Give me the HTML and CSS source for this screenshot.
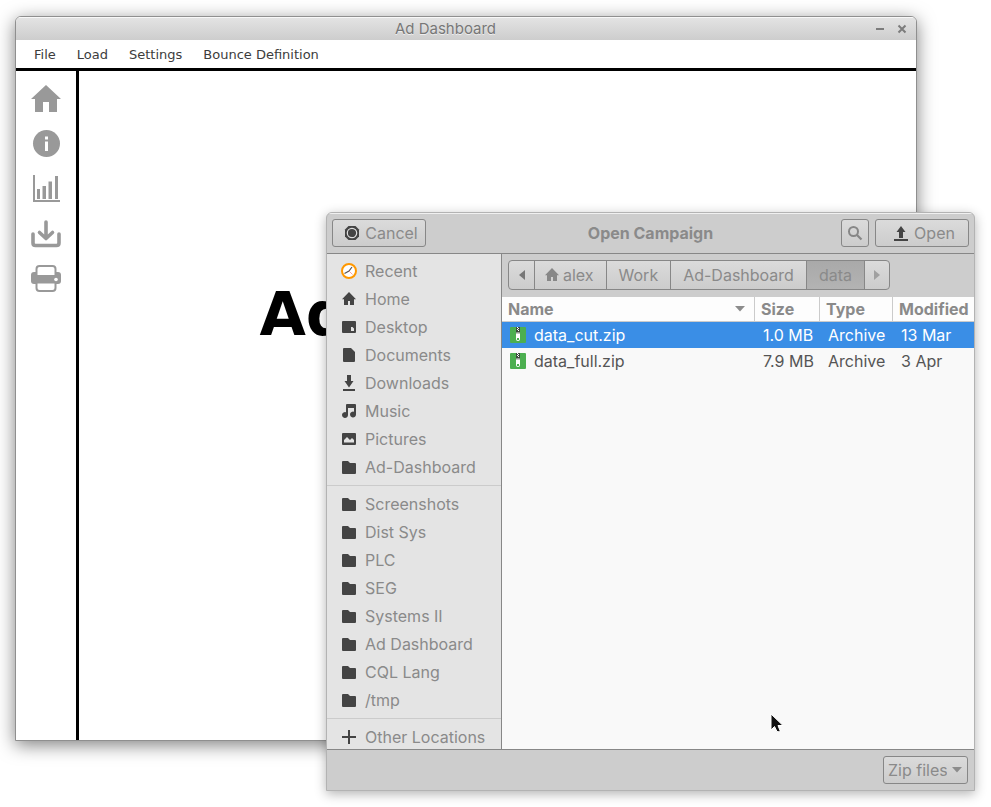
FILE: index.html
```html
<!DOCTYPE html>
<html lang="en">
<head>
<meta charset="utf-8">
<title>Ad Dashboard</title>
<link rel="stylesheet" href="styles.css">
</head>
<body>
<svg class="defs" aria-hidden="true">
  <symbol id="folder" viewBox="0 0 16 16"><path d="M1 3a1 1 0 0 1 1-1h5l2 2h5a1 1 0 0 1 1 1v9a1 1 0 0 1-1 1H2a1 1 0 0 1-1-1z"/></symbol>
  <symbol id="home" viewBox="0 0 16 16"><path d="M8 1 1 8.200h2V14h4v-4h2v4h4V8.200h2z"/></symbol>
  <symbol id="zip" viewBox="0 0 16 16">
    <rect width="16" height="16" rx="1" fill="#4caf50"/>
    <path d="M6 0h4v6H6z" fill="#3c4a3d"/>
    <path d="M7 0h1v1H7zM8 1h1v1H8zM7 2h1v1H7zM8 3h1v1H8z" fill="#fff"/>
    <path d="M6 6.500Q6 5 8 5t2 1.500V12q0 2-2 2t-2-2z" fill="#fff"/>
    <path d="M6 6.500Q6 5 8 5t2 1.500z" fill="#8a8f8a"/>
    <rect x="7" y="11" width="2" height="2" fill="#4caf50"/>
  </symbol>
</svg>

<main class="window app">
  <header class="titlebar">
    <span class="titlebar-text">Ad Dashboard</span>
    <div class="window-controls">
      <button aria-label="Minimise"><svg viewBox="0 0 10 10"><path d="M1 5h8" stroke-width="2"/></svg></button>
      <button aria-label="Close"><svg viewBox="0 0 10 10"><path d="M1.500 1.500l7 7M8.500 1.500l-7 7" stroke-width="2"/></svg></button>
    </div>
  </header>
  <nav class="menubar">
    <button>File</button><button>Load</button><button>Settings</button><button>Bounce Definition</button>
  </nav>
  <div class="workspace">
    <nav class="toolbar">
      <button aria-label="Home"><svg viewBox="0 0 30 30"><path d="M15 1 0 15h4v13h8V18h6v10h8V15h4z"/></svg></button>
      <button aria-label="Information"><svg viewBox="0 0 30 30"><circle cx="15.500" cy="14.500" r="13.500"/><path d="M14 7.500h3v3h-3zM14 12.500h3V22h-3z" fill="#fff"/></svg></button>
      <button aria-label="Charts"><svg viewBox="0 0 30 30"><path d="M2 1h2v25h25v2H2zM6 15h3v10H6zM11.500 12h3.500v13h-3.500zM17.500 7.500H21V25h-3.500zM24 2h3v23h-3z"/></svg></button>
      <button aria-label="Export"><svg viewBox="0 0 30 30"><path d="M2 15v9q0 2.500 2.500 2.500h21Q28 26.500 28 24v-9M15 3v16M8.500 13.500l6.500 6 6.500-6" fill="none" stroke="#999" stroke-width="3.600" stroke-linecap="round" stroke-linejoin="round"/></svg></button>
      <button aria-label="Print"><svg viewBox="0 0 30 30"><path d="M0 11q0-3 3-3h24q3 0 3 3v6q0 3-3 3H3q-3 0-3-3z"/><path d="M5.500 12V5q0-3 3-3h13q3 0 3 3v7zM5.500 18.500h19V24q0 3-3 3h-13q-3 0-3-3z" fill="#fff" stroke="#999" stroke-width="2"/><path d="M4 12h22v6H4z"/><circle cx="25" cy="15.500" r="1.800" fill="#fff"/></svg></button>
    </nav>
    <section class="welcome"><h1>Ad Dashboard</h1></section>
  </div>
</main>

<section class="window dialog" role="dialog" aria-labelledby="dialog-title">
  <header class="dialog-header">
    <div class="header-side">
      <button class="btn action"><svg class="icon dark" viewBox="0 0 16 16"><path d="M4.500 1h7L15 4.500v7L11.500 15h-7L1 11.500v-7z"/><circle cx="8" cy="8" r="4.700" fill="none" stroke="#ddd" stroke-width="1.200"/></svg>Cancel</button>
    </div>
    <h2 id="dialog-title">Open Campaign</h2>
    <div class="header-side end">
      <button class="btn square" aria-label="Search"><svg class="icon" viewBox="0 0 16 16"><circle cx="6.500" cy="6.500" r="4.500" fill="none" stroke="#878787" stroke-width="2"/><path d="M10 10l4.500 4.500" stroke="#878787" stroke-width="2.200"/></svg></button>
      <button class="btn action"><svg class="icon dark" viewBox="0 0 16 16"><path d="M8 1l4.500 6H10v6H6V7H3.500zM1 14h14v2H1z"/></svg>Open</button>
    </div>
  </header>

  <div class="dialog-body">
    <nav class="places">
      <ul>
        <li><a href="#"><svg class="icon" viewBox="0 0 16 16"><circle cx="8" cy="8" r="7" fill="#fff" stroke="#ff9800" stroke-width="2"/><path d="M3.500 10.500 8 8l3-4" fill="none" stroke="#555" stroke-width="1.200"/><path d="M8 8l3.500 3.500" stroke="#f4a0a0"/></svg>Recent</a></li>
        <li><a href="#"><svg class="icon dark"><use href="#home"/></svg>Home</a></li>
        <li><a href="#"><svg class="icon dark" viewBox="0 0 16 16"><path fill-rule="evenodd" d="M2 2h12q1 0 1 1v10q0 1-1 1H2q-1 0-1-1V3q0-1 1-1zm8 6v4h3v-2.500L11.500 8z"/></svg>Desktop</a></li>
        <li><a href="#"><svg class="icon dark" viewBox="0 0 16 16"><path d="M3 1h7l4 4v9q0 1-1 1H3q-1 0-1-1V2q0-1 1-1z"/></svg>Documents</a></li>
        <li><a href="#"><svg class="icon dark" viewBox="0 0 16 16"><path d="M6 0h4v6h2.500L8 12.500 3.500 6H6zM2 14h12v2H2z"/></svg>Downloads</a></li>
        <li><a href="#"><svg class="icon dark" viewBox="0 0 16 16"><path d="M5 2q0-1 1-1h8q1 0 1 1v9.500a3 3 0 1 1-2-2.800V5H7v7a3 3 0 1 1-2-2.800z"/></svg>Music</a></li>
        <li><a href="#"><svg class="icon dark" viewBox="0 0 16 16"><path fill-rule="evenodd" d="M2 2h12q1 0 1 1v10q0 1-1 1H2q-1 0-1-1V3q0-1 1-1zm1 9.500h10V9l-2-2-2 2-3-3-3 3z"/></svg>Pictures</a></li>
        <li><a href="#"><svg class="icon dark"><use href="#folder"/></svg>Ad-Dashboard</a></li>
      </ul>
      <ul>
        <li><a href="#"><svg class="icon dark"><use href="#folder"/></svg>Screenshots</a></li>
        <li><a href="#"><svg class="icon dark"><use href="#folder"/></svg>Dist Sys</a></li>
        <li><a href="#"><svg class="icon dark"><use href="#folder"/></svg>PLC</a></li>
        <li><a href="#"><svg class="icon dark"><use href="#folder"/></svg>SEG</a></li>
        <li><a href="#"><svg class="icon dark"><use href="#folder"/></svg>Systems II</a></li>
        <li><a href="#"><svg class="icon dark"><use href="#folder"/></svg>Ad Dashboard</a></li>
        <li><a href="#"><svg class="icon dark"><use href="#folder"/></svg>CQL Lang</a></li>
        <li><a href="#"><svg class="icon dark"><use href="#folder"/></svg>/tmp</a></li>
      </ul>
      <ul>
        <li><a href="#"><svg class="icon dark" viewBox="0 0 16 16"><path d="M7 1h2v6h6v2H9v6H7V9H1V7h6z"/></svg>Other Locations</a></li>
      </ul>
    </nav>

    <div class="browser">
      <div class="pathbar">
        <div class="crumbs">
          <button class="arrow" aria-label="Back"><svg viewBox="0 0 6 10"><path d="M6 0v10L0 5z"/></svg></button>
          <button class="root"><svg class="icon"><use href="#home"/></svg>alex</button>
          <button>Work</button>
          <button>Ad-Dashboard</button>
          <button class="current">data</button>
          <button class="arrow faded" aria-label="Forward"><svg viewBox="0 0 6 10"><path d="M0 0v10l6-5z"/></svg></button>
        </div>
      </div>
      <table>
        <colgroup><col><col class="col-size"><col class="col-type"><col class="col-modified"></colgroup>
        <thead>
          <tr>
            <th><div class="sorted">Name<svg viewBox="0 0 10 6"><path d="M0 0h10L5 5.500z"/></svg></div></th>
            <th>Size</th><th>Type</th><th>Modified</th>
          </tr>
        </thead>
        <tbody>
          <tr class="selected"><td><div class="file"><svg class="icon"><use href="#zip"/></svg>data_cut.zip</div></td><td class="size">1.0 MB</td><td>Archive</td><td>13 Mar</td></tr>
          <tr><td><div class="file"><svg class="icon"><use href="#zip"/></svg>data_full.zip</div></td><td class="size">7.9 MB</td><td>Archive</td><td>3 Apr</td></tr>
        </tbody>
      </table>
    </div>
  </div>

  <footer class="dialog-footer">
    <div class="filter">
      <select class="btn" aria-label="File type"><option>Zip files</option></select>
      <svg viewBox="0 0 10 6"><path d="M0 0h10L5 5.500z"/></svg>
    </div>
  </footer>
</section>

<svg class="cursor" viewBox="0 0 14 20" aria-hidden="true"><path d="M1 1v16l3.500-3.500 2.500 5q2 1 3-1L8 12.500h5z" fill="#111" stroke="#fff"/></svg>
</body>
</html>
```
FILE: styles.css
```css
* {
  box-sizing: border-box;
}

body {
  margin: 0;
  min-height: 100vh;
  background: #fff;
  font: 16px/20px Inter, "Liberation Sans", sans-serif;
  color: #8a8a8a;
  overflow: hidden;
}

button,
select {
  margin: 0;
  padding: 0;
  border: 0;
  background: none;
  font: inherit;
  color: inherit;
}

a {
  color: inherit;
  text-decoration: none;
}

.defs {
  display: none;
}

.icon {
  width: 16px;
  height: 16px;
  flex: none;
  fill: #878787;
}

.icon.dark {
  fill: #444;
}

.window {
  position: absolute;
  display: flex;
  flex-direction: column;
  overflow: hidden;
}

/* Application window */

.app {
  inset: 16px 74px 66px 15px;
  border: 1px solid #8f8f8f;
  border-radius: 6px 6px 0 0;
  background: #fff;
  box-shadow: 0 4px 18px rgba(0, 0, 0, 0.5);
}

.titlebar {
  display: flex;
  align-items: center;
  height: 23px;
  padding-right: 9px;
  border-top: 1px solid #f8f8f8;
  background: linear-gradient(#e3e3e3, #cdcdcd);
}

.titlebar-text {
  flex: 1;
  font-size: 15px;
  text-align: center;
  color: #777;
  text-shadow: 0 1px #eee;
}

.window-controls {
  display: flex;
  gap: 12px;
}

.window-controls button {
  display: flex;
}

.window-controls svg {
  width: 10px;
  height: 10px;
  stroke: #7c7c7c;
}

.menubar {
  display: flex;
  align-items: center;
  gap: 21px;
  height: 31px;
  padding: 2px 18px 0;
  border-bottom: 3px solid #000;
  font: 13px/16px "DejaVu Sans", sans-serif;
  color: #3c3c3c;
}

.workspace {
  display: flex;
  flex: 1;
  min-height: 0;
}

.toolbar {
  display: flex;
  flex-direction: column;
  align-items: center;
  gap: 15px;
  width: 63px;
  padding-top: 13px;
  border-right: 3px solid #000;
}

.toolbar button {
  display: flex;
}

.toolbar svg {
  width: 30px;
  height: 30px;
  fill: #999;
}

.welcome {
  flex: 1;
  padding-top: 208px;
  text-align: center;
}

.welcome h1 {
  margin: 0;
  font: bold 60px/70px "DejaVu Sans", sans-serif;
  color: #000;
  white-space: nowrap;
}

/* File dialog */

.dialog {
  inset: 212px 16px 16px 326px;
  border: 1px solid #b3b3b3;
  border-radius: 6px 6px 0 0;
  background: #cdcdcd;
  box-shadow: 0 3px 12px rgba(0, 0, 0, 0.3);
}

.dialog-header {
  display: grid;
  grid-template-columns: 1fr auto 1fr;
  align-items: center;
  height: 41px;
  padding: 0 5px 2px;
  border-top: 1px solid #f0f0f0;
  border-bottom: 1px solid #878787;
}

.dialog-header h2 {
  margin: 0;
  font-size: 16px;
  font-weight: 700;
}

.header-side {
  display: flex;
  gap: 6px;
}

.header-side.end {
  justify-content: flex-end;
}

.btn {
  height: 28px;
  border: 1px solid #878787;
  border-radius: 3px;
  background: linear-gradient(#dbdbdb, #cccccc);
}

.btn.action,
.btn.square {
  display: flex;
  align-items: center;
  justify-content: center;
  gap: 5px;
}

.btn.action {
  width: 94px;
  padding-left: 4px;
}

.btn.square {
  width: 28px;
}

.dialog-body {
  display: flex;
  flex: 1;
  min-height: 0;
}

.places {
  width: 175px;
  padding-top: 3px;
  border-right: 1px solid #878787;
  background: #e4e4e4;
  overflow: hidden;
}

.places ul {
  margin: 0;
  padding: 0;
  list-style: none;
}

.places ul + ul {
  margin-top: 4px;
  padding-top: 4px;
  border-top: 1px solid #cbcbcb;
}

.places a {
  display: flex;
  align-items: center;
  gap: 8px;
  height: 28px;
  padding-left: 14px;
}

.browser {
  flex: 1;
  min-width: 0;
  background: #f9f9f9;
}

.pathbar {
  display: flex;
  padding: 6px 6px 7px;
  background: #cdcdcd;
}

.crumbs {
  display: flex;
  height: 30px;
  border: 1px solid #878787;
  border-radius: 4px;
  background: linear-gradient(#dbdbdb, #cccccc);
  overflow: hidden;
}

.crumbs button {
  display: flex;
  align-items: center;
  padding: 0 12px;
  border-left: 1px solid #878787;
}

.crumbs button:first-child {
  border-left: 0;
}

.crumbs .root {
  gap: 3px;
  padding-left: 9px;
}

.crumbs .current {
  background: linear-gradient(#a9a9a9, #b3b3b3);
}

.crumbs .arrow {
  justify-content: center;
  width: 25px;
  padding: 0;
}

.crumbs .arrow svg {
  width: 6px;
  height: 10px;
  fill: #777;
}

.crumbs .faded svg {
  fill: #a0a0a0;
}

table {
  width: 100%;
  table-layout: fixed;
  border-collapse: separate;
  border-spacing: 0;
}

.col-size {
  width: 65px;
}

.col-type {
  width: 73px;
}

.col-modified {
  width: 81px;
}

th {
  height: 25px;
  padding: 0 6px;
  border-right: 1px solid #cbcbcb;
  border-bottom: 1px solid #cbcbcb;
  background: #fdfdfd;
  font-weight: 700;
  text-align: left;
}

th:last-child {
  border-right: 0;
}

.sorted {
  display: flex;
  align-items: center;
  justify-content: space-between;
  padding-right: 3px;
}

.sorted svg,
.filter svg {
  width: 10px;
  height: 6px;
  fill: #8c8c8c;
}

td {
  height: 26px;
  padding: 0 8px;
  color: #555;
  white-space: nowrap;
}

.size {
  text-align: right;
}

.selected td {
  background: #3a8ee6;
  color: #fff;
}

.file {
  display: flex;
  align-items: center;
  gap: 8px;
}

.dialog-footer {
  display: flex;
  align-items: center;
  justify-content: flex-end;
  height: 41px;
  padding: 0 6px;
  border-top: 1px solid #878787;
}

.filter {
  display: grid;
  align-items: center;
}

.filter select,
.filter svg {
  grid-area: 1 / 1;
}

.filter select {
  appearance: none;
  width: 85px;
  padding: 0 20px 0 4px;
}

.filter svg {
  justify-self: end;
  margin-right: 6px;
  pointer-events: none;
}

.cursor {
  position: absolute;
  left: 770px;
  top: 713px;
  width: 14px;
  height: 20px;
}
```
